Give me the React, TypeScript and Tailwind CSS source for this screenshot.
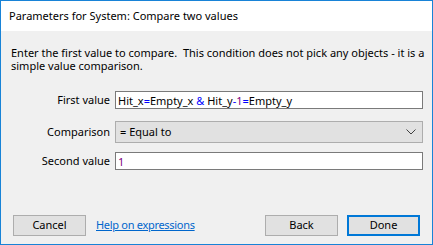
import React from 'react';

const font = { fontFamily: '"Noto Sans", "Open Sans", sans-serif' };

function Field({ label, children }: { label: string; children: React.ReactNode }) {
  return (
    <div className="flex items-center">
      <div className="w-[104px] shrink-0 pr-[5px] text-right text-[11px] text-[#000]">{label}</div>
      <div className="flex-1">{children}</div>
    </div>
  );
}

export default function App() {
  return (
    <div
      className="w-[433px] h-[245px] border border-[#1883d7] bg-[#f0f0f0] flex flex-col text-[11px] text-black overflow-hidden"
      style={font}
    >
      {/* Title bar */}
      <div className="h-[30px] shrink-0 bg-white flex items-center pl-[8px] text-[11px] text-[#000]">
        Parameters for System: Compare two values
      </div>

      {/* Body */}
      <div className="flex-1 flex flex-col pl-[10px] pr-[9px]">
        <p className="mt-[15px] leading-[13px] whitespace-pre">
          {'Enter the first value to compare.  This condition does not pick any objects - it is a\nsimple value comparison.'}
        </p>

        <div className="mt-[19px] flex flex-col">
          <Field label="First value">
            <div className="h-[18px] border border-[#7a7a7a] bg-white flex items-center pl-[2px] whitespace-pre leading-none">
              <span>Hit_x</span>
              <span className="text-[#0000ff]">=</span>
              <span>Empty_x </span>
              <span className="text-[#0000ff]">&amp;</span>
              <span> Hit_y</span>
              <span className="text-[#0000ff]">-</span>
              <span className="text-[#800080]">1</span>
              <span className="text-[#0000ff]">=</span>
              <span>Empty_y</span>
            </div>
          </Field>

          <div className="mt-[12px]">
            <Field label="Comparison">
              <div className="h-[22px] border border-[#adadad] bg-[#e1e1e1] flex items-center justify-between pl-[4px] pr-[6px]">
                <span>= Equal to</span>
                <svg width="10" height="6" viewBox="0 0 10 6" fill="none">
                  <path d="M0.5 0.5 L5 5 L9.5 0.5" stroke="#404040" strokeWidth="1" />
                </svg>
              </div>
            </Field>
          </div>

          <div className="mt-[9px]">
            <Field label="Second value">
              <div className="h-[18px] border border-[#7a7a7a] bg-white flex items-center pl-[2px] leading-none">
                <span className="text-[#800080]">1</span>
              </div>
            </Field>
          </div>
        </div>

        {/* Footer buttons */}
        <div className="mt-[45px] flex items-center pl-[2px] pr-[3px]">
          <button className="w-[73px] h-[21px] border border-[#adadad] bg-[#e1e1e1] text-[11px]">Cancel</button>
          <a className="ml-[10px] text-[#0066cc] underline cursor-pointer tracking-[-0.3px]">Help on expressions</a>
          <div className="flex-1" />
          <button className="w-[73px] h-[21px] border border-[#adadad] bg-[#e1e1e1] text-[11px]">Back</button>
          <button className="ml-[9px] w-[73px] h-[21px] border-2 border-[#0078d7] bg-[#e1e1e1] text-[11px]">Done</button>
        </div>
      </div>
    </div>
  );
}
